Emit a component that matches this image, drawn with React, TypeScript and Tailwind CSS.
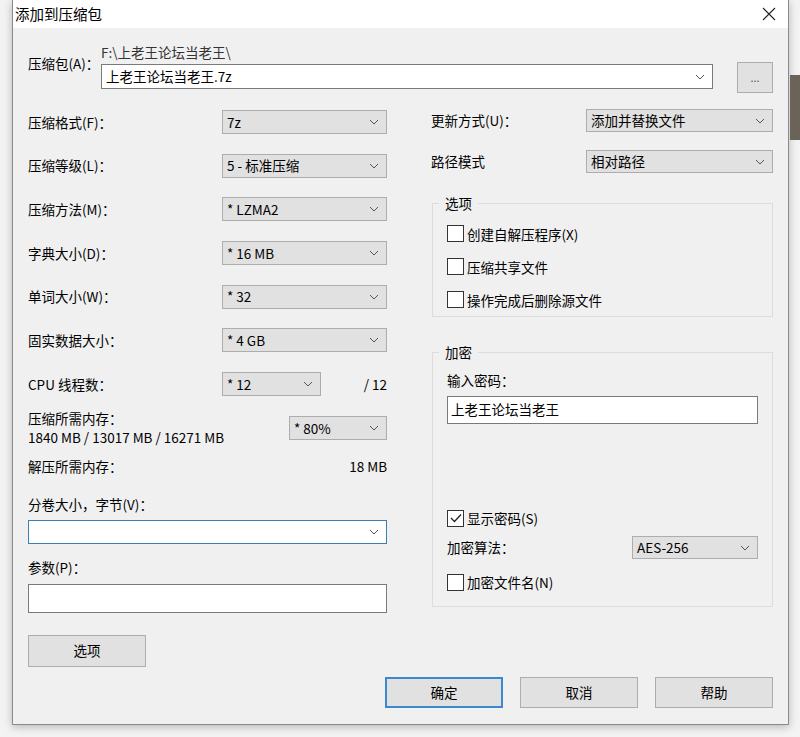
import React from "react";

const Chev = () => (
  <svg width="10" height="6" viewBox="0 0 10 6" className="shrink-0"><path d="M1 1 L5 5 L9 1" fill="none" stroke="#555" strokeWidth="1" /></svg>
);

function Combo({ text, w, gray = true, blue = false, h = 24 }: { text: string; w: string; gray?: boolean; blue?: boolean; h?: number }) {
  return (
    <div
      className={`${w} flex items-center justify-between pl-[4px] pr-[7px] border ${blue ? "border-[#3c7fb1] bg-white" : gray ? "border-[#adadad] bg-[#e1e1e1]" : "border-[#7a7a7a] bg-white"}`}
      style={{ height: h }}
    >
      <span>{text}</span>
      <Chev />
    </div>
  );
}

function Check({ label, checked = false }: { label: string; checked?: boolean }) {
  return (
    <div className="flex items-center gap-[3px] h-[33px]">
      <div className="w-[17px] h-[17px] border border-[#333] bg-white flex items-center justify-center">
        {checked && (
          <svg width="12" height="10" viewBox="0 0 12 10"><path d="M1 5 L4.5 8.5 L11 1.5" fill="none" stroke="#222" strokeWidth="1.3" /></svg>
        )}
      </div>
      <span>{label}</span>
    </div>
  );
}

function Row({ label, value, w = "w-[165px]" }: { label: string; value: string; w?: string }) {
  return (
    <div className="h-[43.7px] flex items-center justify-between">
      <span>{label}</span>
      <Combo text={value} w={w} />
    </div>
  );
}

export default function App() {
  return (
    <div
      className="w-[800px] h-[737px] bg-[#f3f3f3] relative overflow-hidden text-[13.5px] text-black"
      style={{ fontFamily: '"Noto Sans CJK SC", "Liberation Sans", sans-serif' }}
    >
      <div className="absolute right-0 top-[75px] w-[10px] h-[65px] bg-[#6b6258]" />
      <div className="ml-[12px] w-[777px] h-[725px] border-l border-r border-b border-[#8a8a8a] bg-[#f0f0f0] shadow-[0_2px_8px_rgba(0,0,0,0.25)] flex flex-col">
        <div className="h-[28px] bg-white flex items-center justify-between pl-[2px] pr-[12px] text-[14.5px]">
          <span>添加到压缩包</span>
          <svg width="14" height="14" viewBox="0 0 14 14"><path d="M1 1 L13 13 M13 1 L1 13" stroke="#222" strokeWidth="1.1" /></svg>
        </div>
        <div className="flex pl-[15px] pr-[15px] pt-[14px]">
          <div className="w-[75px] pt-[11px]">压缩包(A)：</div>
          <div className="flex-1 flex flex-col">
            <span className="h-[22px] text-[#333]">F:\上老王论坛当老王\</span>
            <div className="flex items-start">
              <div className="w-[612px] h-[25px] border border-[#7a7a7a] bg-white flex items-center justify-between pl-[4px] pr-[7px]">
                <span>上老王论坛当老王.7z</span>
                <Chev />
              </div>
              <div className="ml-[24px] -mt-[2px] w-[36px] h-[31px] border border-[#adadad] bg-[#e1e1e1] flex items-center justify-center text-[11px] text-[#555]">...</div>
            </div>
          </div>
        </div>
        <div className="flex pl-[15px] pr-[15px] mt-[7px]">
          <div className="w-[359px] flex flex-col">
            <Row label="压缩格式(F)：" value="7z" />
            <Row label="压缩等级(L)：" value="5 - 标准压缩" />
            <Row label="压缩方法(M)：" value="* LZMA2" />
            <Row label="字典大小(D)：" value="* 16 MB" />
            <Row label="单词大小(W)：" value="* 32" />
            <Row label="固实数据大小：" value="* 4 GB" />
            <div className="h-[43.7px] flex items-center">
              <span className="w-[194px]">CPU 线程数：</span>
              <Combo text="* 12" w="w-[99px]" />
              <span className="flex-1 text-right">/ 12</span>
            </div>
            <div className="flex items-center justify-between mt-[3px]">
              <div className="flex flex-col leading-[19px]">
                <span>压缩所需内存：</span>
                <span>1840 MB / 13017 MB / 16271 MB</span>
              </div>
              <Combo text="* 80%" w="w-[98px]" />
            </div>
            <div className="flex justify-between mt-[9px]">
              <span>解压所需内存：</span>
              <span>18 MB</span>
            </div>
            <div className="mt-[18px]">分卷大小，字节(V)：</div>
            <div className="mt-[6px]"><Combo text="" w="w-full" blue /></div>
            <div className="mt-[13px]">参数(P)：</div>
            <div className="mt-[6px] h-[29px] border border-[#7a7a7a] bg-white" />
            <div className="mt-[22px] w-[118px] h-[32px] border border-[#adadad] bg-[#e1e1e1] flex items-center justify-center">选项</div>
          </div>
          <div className="ml-[44px] flex-1 flex flex-col">
            <div className="h-[21px] mt-[10px] flex items-center justify-between">
              <span>更新方式(U)：</span>
              <Combo text="添加并替换文件" w="w-[187px]" h={23} />
            </div>
            <div className="h-[21px] mt-[20px] flex items-center justify-between">
              <span>路径模式</span>
              <Combo text="相对路径" w="w-[187px]" h={23} />
            </div>
            <fieldset className="mt-[21px] ml-[1px] border border-[#dcdcdc] h-[124px] px-[14px] pt-[4px]">
              <legend className="px-[6px] -ml-[8px]">选项</legend>
              <Check label="创建自解压程序(X)" />
              <Check label="压缩共享文件" />
              <Check label="操作完成后删除源文件" />
            </fieldset>
            <fieldset className="mt-[25px] ml-[1px] border border-[#dcdcdc] h-[265px] px-[14px]">
              <legend className="px-[6px] -ml-[8px]">加密</legend>
              <div className="mt-[8px]">输入密码：</div>
              <div className="mt-[5px] h-[28px] border border-[#7a7a7a] bg-white flex items-center px-[3px]">上老王论坛当老王</div>
              <div className="mt-[78px]"><Check label="显示密码(S)" checked /></div>
              <div className="flex items-center justify-between h-[26px]">
                <span>加密算法：</span>
                <Combo text="AES-256" w="w-[126px]" h={23} />
              </div>
              <div className="mt-[5px]"><Check label="加密文件名(N)" /></div>
            </fieldset>
          </div>
        </div>
        <div className="flex justify-end gap-[17px] pr-[15px] mt-[10px]">
          <div className="w-[118px] h-[31px] border-2 border-[#3c89d0] bg-[#e1e1e1] flex items-center justify-center">确定</div>
          <div className="w-[118px] h-[31px] border border-[#adadad] bg-[#e1e1e1] flex items-center justify-center">取消</div>
          <div className="w-[118px] h-[31px] border border-[#adadad] bg-[#e1e1e1] flex items-center justify-center">帮助</div>
        </div>
      </div>
    </div>
  );
}
